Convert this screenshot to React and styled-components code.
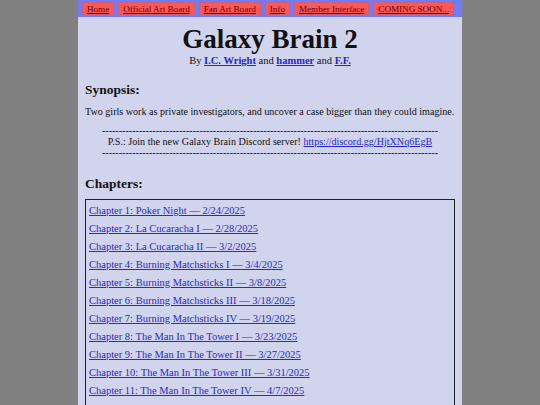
import React from 'react';
import styled, { createGlobalStyle } from 'styled-components';

const GlobalStyle = createGlobalStyle`
  html, body {
    margin: 0;
    padding: 0;
    background: #808080;
    font-family: "Liberation Serif", "Times New Roman", serif;
  }
`;

const navItems = ['Home', 'Official Art Board', 'Fan Art Board', 'Info', 'Member Interface', 'COMING SOON...'];

const chapters = [
  'Chapter 1: Poker Night — 2/24/2025',
  'Chapter 2: La Cucaracha I — 2/28/2025',
  'Chapter 3: La Cucaracha II — 3/2/2025',
  'Chapter 4: Burning Matchsticks I — 3/4/2025',
  'Chapter 5: Burning Matchsticks II — 3/8/2025',
  'Chapter 6: Burning Matchsticks III — 3/18/2025',
  'Chapter 7: Burning Matchsticks IV — 3/19/2025',
  'Chapter 8: The Man In The Tower I — 3/23/2025',
  'Chapter 9: The Man In The Tower II — 3/27/2025',
  'Chapter 10: The Man In The Tower III — 3/31/2025',
  'Chapter 11: The Man In The Tower IV — 4/7/2025',
  'Chapter 12: The Man In The Tower V — 4/12/2025',
];

const dashes = '-'.repeat(100);

export default function App() {
  return (
    <>
      <GlobalStyle />
      <Page>
        <Nav>
          {navItems.map((item) => (
            <NavButton key={item} href="#">{item}</NavButton>
          ))}
        </Nav>
        <Title>Galaxy Brain 2</Title>
        <Byline>
          By <AuthorLink href="#">I.C. Wright</AuthorLink> and <AuthorLink href="#">hammer</AuthorLink> and <AuthorLink href="#">F.F.</AuthorLink>
        </Byline>
        <Section>
          <Heading>Synopsis:</Heading>
          <Text>Two girls work as private investigators, and uncover a case bigger than they could imagine.</Text>
          <Notice>
            <Dashes>{dashes}</Dashes>
            <div>P.S.: Join the new Galaxy Brain Discord server! <TextLink href="#">https://discord.gg/HjtXNq6EgB</TextLink></div>
            <Dashes>{dashes}</Dashes>
          </Notice>
        </Section>
        <Section>
          <Heading $top={18}>Chapters:</Heading>
          <ChapterBox>
            {chapters.map((c) => (
              <ChapterLink key={c} href="#">{c}</ChapterLink>
            ))}
          </ChapterBox>
        </Section>
      </Page>
    </>
  );
}

// CSS
const Page = styled.div`
  width: 384px;
  margin: 0 auto;
  min-height: 405px;
  background: #d0d4ec;
  color: #111;
`;

const Nav = styled.nav`
  display: flex;
  gap: 4px;
  padding: 2px 4px;
  background: #6e7cf6;
  height: 13px;
`;

const NavButton = styled.a`
  display: inline-flex;
  align-items: center;
  padding: 0 4px;
  background: #ff5656;
  border: 1px solid #c8607a;
  color: #5a0a0a;
  font-size: 9.1px;
  text-decoration: underline;
  white-space: nowrap;
`;

const Title = styled.h1`
  margin: 7px 0 0;
  text-align: center;
  font-size: 27px;
  line-height: 30px;
  font-weight: bold;
`;

const Byline = styled.div`
  text-align: center;
  font-size: 10.5px;
  line-height: 13px;
`;

const AuthorLink = styled.a`
  color: #2626d0;
  font-weight: bold;
  text-decoration: underline;
`;

const Section = styled.section`
  padding: 0 7px;
`;

const Heading = styled.h2`
  margin: ${(p) => p.$top ?? 15}px 0 7px;
  font-size: 13.5px;
  line-height: 16px;
  font-weight: bold;
`;

const Text = styled.p`
  margin: 0;
  font-size: 10.1px;
  line-height: 14px;
  white-space: nowrap;
`;

const Notice = styled.div`
  margin-top: 6px;
  text-align: center;
  font-size: 10.1px;
  line-height: 11px;
`;

const Dashes = styled.div`
  overflow: hidden;
  white-space: nowrap;
`;

const TextLink = styled.a`
  color: #2626d0;
  text-decoration: underline;
`;

const ChapterBox = styled.div`
  display: flex;
  flex-direction: column;
  gap: 4px;
  padding: 4px 3px 2px;
  border: 1px solid #222;
`;

const ChapterLink = styled.a`
  color: #2a2ac8;
  font-size: 10.5px;
  line-height: 14px;
  text-decoration: underline;
  align-self: flex-start;
`;
